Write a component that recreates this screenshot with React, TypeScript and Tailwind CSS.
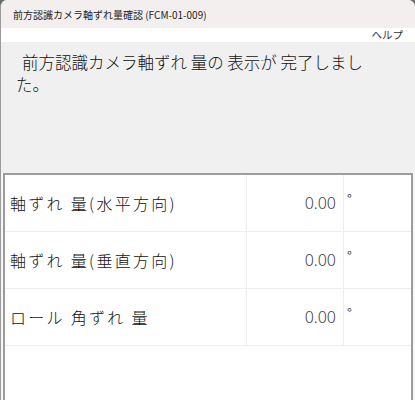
import React from "react";

const rows = [
  { label: "軸ずれ 量(水平方向)", value: "0.00" },
  { label: "軸ずれ 量(垂直方向)", value: "0.00" },
  { label: "ロール 角ずれ 量", value: "0.00" },
];

export default function App() {
  return (
    <div
      className="w-[415px] h-[400px] overflow-hidden bg-[#6b6b6b]"
      style={{ fontFamily: '"Noto Sans CJK JP", "Noto Sans", sans-serif' }}
    >
      <div className="flex flex-col h-full rounded-t-[7px] overflow-hidden border-l border-[#9a9a9a] bg-[#f0f0f0]">
        <div className="h-[28px] shrink-0 flex items-center pl-[12px] bg-[#f3efef] text-[10px] text-[#1e1e1e]">
          前方認識カメラ軸ずれ量確認 (FCM-01-009)
        </div>
        <div className="h-[14px] shrink-0 flex items-center justify-end pr-[12px] bg-white text-[10.5px] text-[#333] leading-none">
          ヘルプ
        </div>
        <div className="h-[131px] shrink-0 bg-[#f0f0f0] pt-[9px] text-[16.5px] leading-[22px] font-light text-[#111]">
          <div className="pl-[21px]">前方認識カメラ軸ずれ 量の 表示が 完了しまし</div>
          <div className="pl-[15px]">た。</div>
        </div>
        <div className="flex-1 flex pl-[2px] pr-[2px] bg-[#f7f7f7]">
          <div className="flex-1 flex flex-col bg-white border-t-2 border-l-2 border-r-2 border-[#9c9c9c]">
            {rows.map((r, i) => (
              <div key={i} className="h-[57px] shrink-0 flex border-b border-[#ededed]">
                <div className="w-[242px] shrink-0 flex items-center pl-[5px] text-[16px] tracking-[2.3px] font-light text-[#111] border-r border-[#ededed] whitespace-pre">
                  {r.label}
                </div>
                <div
                  className="w-[97px] shrink-0 flex items-center justify-end pr-[7px] text-[16px] font-light text-[#444] border-r border-[#ededed]"
                  style={{ fontFamily: '"Noto Sans", sans-serif' }}
                >
                  {r.value}
                </div>
                <div className="flex-1 flex items-start pt-[14px] pl-[3px] text-[13px] text-[#444]">
                  °
                </div>
              </div>
            ))}
            <div className="flex-1" />
          </div>
        </div>
      </div>
    </div>
  );
}
